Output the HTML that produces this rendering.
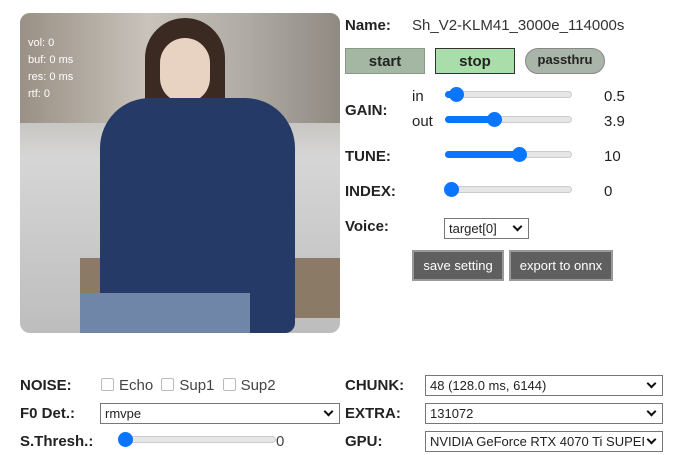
<!DOCTYPE html><html><head><style>
body{margin:0;width:680px;height:455px;background:#fff;font-family:"Liberation Sans",sans-serif;position:relative;overflow:hidden;color:#222}
.a{position:absolute}
.b{font-weight:bold;font-size:15px}
.t{font-size:15px}
.tr{position:absolute;height:7px;border-radius:4px;background:#e6e6e6;border:1px solid #ccc;box-sizing:border-box}
.fl{position:absolute;height:7px;border-radius:4px;background:#0a75ff}
.th{position:absolute;width:15px;height:15px;border-radius:50%;background:#0a75ff}
.sel{position:absolute;border:1px solid #777;background:#fff;font-size:13px;box-sizing:border-box;padding:2px 4px;height:21px;overflow:hidden;white-space:nowrap}
.sel i{position:absolute;right:2px;top:0;width:16px;height:19px;background:#fff}
.sel i:after{content:"";position:absolute;left:4px;top:4px;width:5px;height:5px;border-right:2px solid #111;border-bottom:2px solid #111;transform:rotate(45deg)}
.cb{display:inline-block;width:11px;height:11px;border:1px solid #bbb;border-radius:2px;vertical-align:-1px;margin-right:5px}
</style></head><body>
<div class="a" style="left:20px;top:13px;width:320px;height:320px;border-radius:10px;overflow:hidden;background:linear-gradient(180deg,#b8b6b2 0%,#c9c7c3 35%,#d6d6d6 45%,#bdbdbd 100%)">
<div class="a" style="left:0;top:0;width:320px;height:110px;background:linear-gradient(90deg,#9a9085,#c8c3bb 40%,#b0aca5 70%,#8f8a82)"></div>
<div class="a" style="left:60px;top:245px;width:260px;height:60px;background:#8a7a66"></div>
<div class="a" style="left:125px;top:5px;width:80px;height:110px;border-radius:40px 40px 20px 20px;background:#3a2a22"></div>
<div class="a" style="left:140px;top:25px;width:50px;height:65px;border-radius:25px;background:#e8d2c2"></div>
<div class="a" style="left:80px;top:85px;width:195px;height:235px;border-radius:50px 50px 10px 10px;background:#263a68"></div>
<div class="a" style="left:60px;top:280px;width:170px;height:40px;background:#6f86a8"></div>
<div class="a" style="left:8px;top:22px;color:#fff;font-size:11px;line-height:17px">vol: 0<br>buf: 0 ms<br>res: 0 ms<br>rtf: 0</div>
</div>
<div class="a b" style="left:345px;top:17px">Name:</div>
<div class="a t" style="left:412px;top:17px;color:#333">Sh_V2-KLM41_3000e_114000s</div>
<div class="a" style="left:345px;top:48px;width:80px;height:26px;background:#a3b7a3;border:1px solid #8a9a8a;box-sizing:border-box;text-align:center;line-height:25px;font-weight:bold;font-size:15px">start</div>
<div class="a" style="left:435px;top:48px;width:80px;height:26px;background:#a9dda9;border:1px solid #333;box-sizing:border-box;text-align:center;line-height:25px;font-weight:bold;font-size:15px">stop</div>
<div class="a" style="left:525px;top:48px;width:80px;height:26px;background:#a9b5a9;border:1px solid #888;border-radius:13px;box-sizing:border-box;text-align:center;line-height:22px;font-weight:bold;font-size:13px">passthru</div>
<div class="a b" style="left:345px;top:102px">GAIN:</div>
<div class="a t" style="left:412px;top:88px">in</div>
<div class="a t" style="left:412px;top:113px">out</div>
<div class="tr" style="left:445px;top:91px;width:127px"></div><div class="fl" style="left:445px;top:91px;width:12px"></div><div class="th" style="left:449px;top:87px"></div>
<div class="tr" style="left:445px;top:116px;width:127px"></div><div class="fl" style="left:445px;top:116px;width:50px"></div><div class="th" style="left:487px;top:112px"></div>
<div class="a t" style="left:604px;top:88px">0.5</div><div class="a t" style="left:604px;top:113px">3.9</div>
<div class="a b" style="left:345px;top:148px">TUNE:</div>
<div class="tr" style="left:445px;top:151px;width:127px"></div><div class="fl" style="left:445px;top:151px;width:75px"></div><div class="th" style="left:512px;top:147px"></div>
<div class="a t" style="left:604px;top:148px">10</div>
<div class="a b" style="left:345px;top:183px">INDEX:</div>
<div class="tr" style="left:445px;top:186px;width:127px"></div><div class="th" style="left:444px;top:182px"></div>
<div class="a t" style="left:604px;top:183px">0</div>
<div class="a b" style="left:345px;top:218px">Voice:</div>
<div class="sel" style="left:444px;top:218px;width:85px">target[0]<i></i></div>
<div class="a" style="left:412px;top:250px;width:92px;height:31px;background:#5f5f5f;border:2px solid #999;box-sizing:border-box;color:#fff;font-size:13px;text-align:center;line-height:27px">save setting</div>
<div class="a" style="left:509px;top:250px;width:104px;height:31px;background:#5f5f5f;border:2px solid #999;box-sizing:border-box;color:#fff;font-size:13px;text-align:center;line-height:27px">export to onnx</div>
<div class="a b" style="left:20px;top:377px">NOISE:</div>
<div class="a t" style="left:101px;top:377px;color:#444"><span class="cb"></span>Echo <span class="cb" style="margin-left:4px"></span>Sup1 <span class="cb" style="margin-left:4px"></span>Sup2</div>
<div class="a b" style="left:20px;top:405px">F0 Det.:</div>
<div class="sel" style="left:100px;top:403px;width:240px">rmvpe<i></i></div>
<div class="a b" style="left:20px;top:433px">S.Thresh.:</div>
<div class="tr" style="left:118px;top:436px;width:158px"></div><div class="th" style="left:118px;top:432px"></div>
<div class="a t" style="left:276px;top:433px;color:#444">0</div>
<div class="a b" style="left:345px;top:377px">CHUNK:</div>
<div class="a b" style="left:345px;top:405px">EXTRA:</div>
<div class="a b" style="left:345px;top:433px">GPU:</div>
<div class="sel" style="left:425px;top:375px;width:238px">48 (128.0 ms, 6144)<i></i></div>
<div class="sel" style="left:425px;top:403px;width:238px">131072<i></i></div>
<div class="sel" style="left:425px;top:431px;width:238px">NVIDIA GeForce RTX 4070 Ti SUPER<i></i></div>
</body></html>
